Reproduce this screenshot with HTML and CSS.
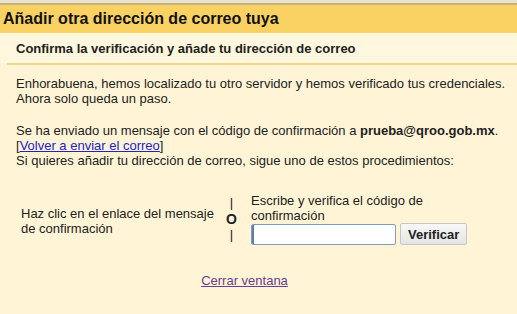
FILE: index.html
```html
<!DOCTYPE html>
<html lang="es">
<head>
  <meta charset="UTF-8">
  <title>Añadir otra dirección de correo tuya</title>
  <link rel="stylesheet" href="styles.css">
</head>
<body>

<div class="ventana">
  <div class="titulo">Añadir otra dirección de correo tuya</div>
  <div class="subtitulo">Confirma la verificación y añade tu dirección de correo</div>

  <div class="contenido">
    <p>Enhorabuena, hemos localizado tu otro servidor y hemos verificado tus credenciales.<br>
    Ahora solo queda un paso.</p>

    <p>Se ha enviado un mensaje con el código de confirmación a <b>prueba@qroo.gob.mx</b>.<br>
    [<a href="#">Volver a enviar el correo</a>]<br>
    Si quieres añadir tu dirección de correo, sigue uno de estos procedimientos:</p>

    <div class="opciones">
      <div class="opcion-enlace">Haz clic en el enlace del mensaje de confirmación</div>
      <div class="separador">
        <span>|</span>
        <span class="letra-o">O</span>
        <span>|</span>
      </div>
      <div class="opcion-codigo">
        <div>Escribe y verifica el código de confirmación</div>
        <div class="fila-codigo">
          <input type="text" class="campo-codigo">
          <button class="boton-verificar">Verificar</button>
        </div>
      </div>
    </div>

    <div class="cerrar"><a href="#" class="visitado">Cerrar ventana</a></div>
  </div>
</div>

</body>
</html>
```

FILE: styles.css
```css
body {
  margin: 0;
  font-family: Arial, "Liberation Sans", sans-serif;
  font-size: 13px;
  color: #222;
  background: #fff5d6;
}
.ventana {
  border-top: 3px solid #e9e3d1;
  min-height: 311px;
}
.titulo {
  border-top: 2px solid #c9b27a;
  background: #fad163;
  font-size: 16px;
  font-weight: bold;
  color: #111;
  padding: 5px 3px 0;
  height: 23px;
}
.subtitulo {
  background: #fff7de;
  font-weight: bold;
  padding: 8px 16px 0;
  height: 22px;
  color: #222;
}
.contenido {
  margin-left: 7px;
  border-top: 2px solid #f2d68a;
  padding: 11px 9px 0;
}
.contenido p {
  margin: 0 0 17px;
  line-height: 15px;
}
a {
  color: #2222cc;
}
a.visitado {
  color: #6a3d8f;
}
.opciones {
  display: flex;
  align-items: center;
  margin-top: 25px;
}
.opcion-enlace {
  width: 196px;
  padding-left: 5px;
  line-height: 15px;
  margin-top: 3px;
}
.separador {
  width: 19px;
  margin-left: 5px;
  display: flex;
  flex-direction: column;
  align-items: center;
  line-height: 16px;
  font-size: 13px;
}
.letra-o {
  font-weight: bold;
  font-size: 14px;
}
.opcion-codigo {
  margin-left: 10px;
  line-height: 15px;
  width: 220px;
}
.fila-codigo {
  display: flex;
  align-items: center;
  gap: 4px;
}
.campo-codigo {
  width: 137px;
  height: 15px;
  border: 1px solid #7e9db9;
  border-radius: 2px;
  padding: 2px 3px;
  font-size: 13px;
  box-shadow: inset 2px 0 0 #5b7fa8;
}
.boton-verificar {
  font-family: Arial, "Liberation Sans", sans-serif;
  font-size: 13px;
  font-weight: bold;
  color: #222;
  background: linear-gradient(#f8f8f8, #e4e4e4);
  border: 1px solid #c6c6c6;
  border-radius: 2px;
  padding: 2px 7px;
  height: 22px;
}
.cerrar {
  text-align: center;
  margin-top: 28px;
  margin-right: 35px;
}
```
